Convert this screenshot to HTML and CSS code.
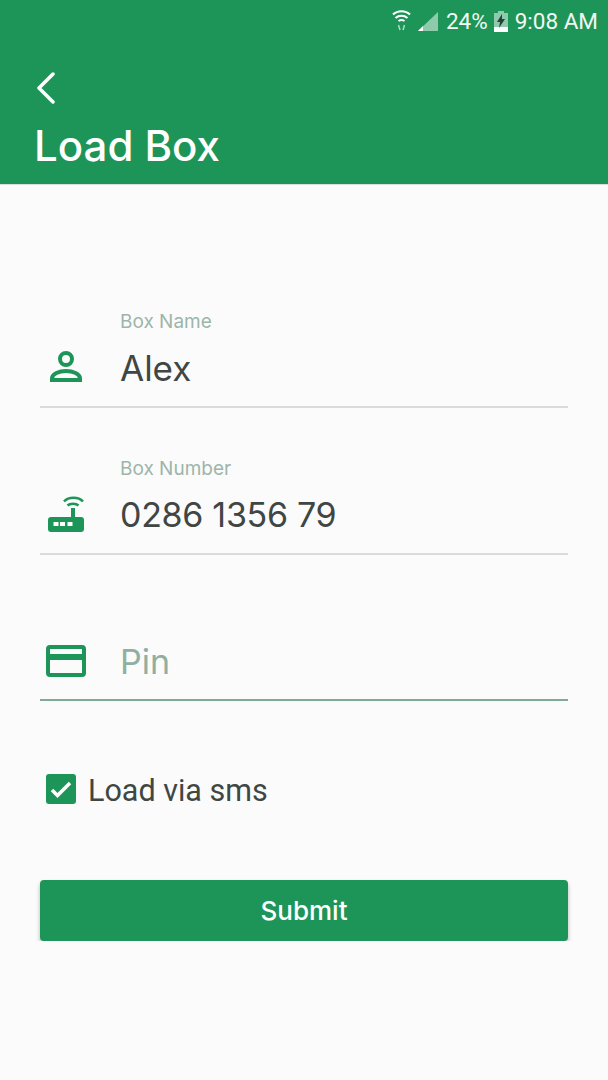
FILE: index.html
```html
<!DOCTYPE html>
<html lang="en">
<head>
    <meta charset="UTF-8">
    <meta name="viewport" content="width=device-width, initial-scale=1.0">
    <title>Load Box</title>
    <link rel="stylesheet" href="styles.css">
</head>
<body>
    <header class="app_bar">
        <div class="status_bar">
            <svg class="st_wifi" width="19" height="22" viewBox="0 0 19 22" fill="none" stroke="#fff" stroke-width="2">
                <path d="M1 4.500C5.500 0 13.500 0 18 4.500"/>
                <path d="M3.500 8C7 5 12 5 15.500 8"/>
                <path d="M6.500 11C8.200 9.800 10.800 9.800 12.500 11"/>
                <path d="M6.500 15l1.500 5M12.500 15l-1.500 5" stroke-width="1.500" stroke-opacity=".65"/>
            </svg>
            <svg class="st_signal" width="20" height="19" viewBox="0 0 20 19">
                <path d="M0 19L20 0v19z" fill="#fff" fill-opacity=".5"/>
                <path d="M0 19l5-5v5z" fill="#fff"/>
            </svg>
            <span class="st_txt">24%</span>
            <svg class="st_batt" width="14" height="21" viewBox="0 0 14 21">
                <path d="M4 0h6v2h4v19H0V2h4z" fill="#fff" fill-opacity=".5"/>
                <path d="M0 16h14v5H0z" fill="#fff"/>
                <path d="M8 3L3 11h3l-1 6 6-9H8z" fill="#24423a"/>
            </svg>
            <span class="st_txt">9:08 AM</span>
        </div>
        <svg class="back" width="20" height="32" viewBox="0 0 20 32" fill="none" stroke="#fff" stroke-width="3.500" stroke-linecap="round" stroke-linejoin="round">
            <path d="M17 2L3 16l14 14"/>
        </svg>
        <h1>Load Box</h1>
    </header>

    <form class="container">
        <div class="field">
            <div class="icon_col icon_person">
                <svg width="32" height="32" viewBox="0 0 32 32" fill="none" stroke="#1e9558" stroke-width="4">
                    <circle cx="16" cy="8" r="6"/>
                    <path d="M2 29v-1.500C2 23 9 20 16 20s14 3 14 7.500V29z"/>
                </svg>
            </div>
            <div class="input_col">
                <label class="float_label">Box Name</label>
                <div class="value value_name">Alex</div>
            </div>
        </div>

        <div class="field field_two">
            <div class="icon_col icon_router">
                <svg width="40" height="38" viewBox="0 0 40 38" fill="none">
                    <path d="M18 6.500C22.500 1.500 32.500 1.500 37 6.500M21.500 10.500C24 8 30 8 32.500 10.500" stroke="#1e9558" stroke-width="2.500"/>
                    <path d="M25 13h4v9h6a3 3 0 0 1 3 3v9a3 3 0 0 1-3 3H5a3 3 0 0 1-3-3v-9a3 3 0 0 1 3-3h20z" fill="#1e9558"/>
                    <path d="M7.500 27h5v4h-5zM14 27h5v4h-5zM21.500 27h5v4h-5z" fill="#fff"/>
                </svg>
            </div>
            <div class="input_col">
                <label class="float_label">Box Number</label>
                <div class="value value_num">0286 1356 79</div>
            </div>
        </div>

        <div class="field field_pin">
            <div class="icon_col">
                <svg width="40" height="32" viewBox="0 0 40 32">
                    <path d="M4 0h32a4 4 0 0 1 4 4v24a4 4 0 0 1-4 4H4a4 4 0 0 1-4-4V4a4 4 0 0 1 4-4zM4 4v5h32V4zM4 15v13h32V15z" fill="#1e9558" fill-rule="evenodd"/>
                </svg>
            </div>
            <div class="input_col">
                <div class="value placeholder">Pin</div>
            </div>
        </div>

        <div class="check_row">
            <svg class="check_box" width="30" height="30" viewBox="0 0 30 30">
                <rect width="30" height="30" rx="3" fill="#1e9558"/>
                <path d="M6 16l5.500 5.500L24 9" fill="none" stroke="#fff" stroke-width="3.500"/>
            </svg>
            <span class="check_txt">Load via sms</span>
        </div>

        <button type="button" class="btn_submit">Submit</button>
    </form>
</body>
</html>
```

FILE: styles.css
```css
*{
    margin:0;
    padding:0;
    box-sizing: border-box;
}
body{
    background-color: #fbfbfb;
    font-family: "Roboto", "Liberation Sans", sans-serif;
    color: #3f4644;
}
.app_bar{
    height: 185px;
    background-color: #1e9558;
    border-bottom: 1px solid #dcdcdc;
    color: white;
    padding-left: 35px;
}
.status_bar{
    display: flex;
    justify-content: flex-end;
    align-items: center;
    height: 42px;
    padding-right: 10px;
}
.st_txt{
    font-size: 22.500px;
    color: #f2f8f4;
}
.st_wifi{
    margin-right: 7px;
}
.st_signal{
    margin-right: 8px;
}
.st_batt{
    margin: 0 7px 0 6px;
}
.back{
    display: block;
    margin-top: 30px;
    margin-left: 1px;
}
h1{
    font-family: "Inter", "Liberation Sans", sans-serif;
    font-size: 42px;
    font-weight: 500;
    line-height: 50px;
    margin-top: 17px;
    margin-left: -1px;
}
.container{
    padding: 0 40px;
}
.field{
    display: flex;
    height: 97px;
    margin-top: 126px;
    border-bottom: 2px solid #dadada;
}
.field_two{
    height: 96px;
    margin-top: 51px;
}
.field_pin{
    height: 96px;
    margin-top: 50px;
    border-bottom-color: #7faa95;
}
.icon_col{
    width: 80px;
    padding-left: 6px;
    display: flex;
    align-items: flex-end;
    padding-bottom: 22px;
}
.icon_person{
    padding-left: 10px;
    padding-bottom: 23px;
}
.icon_router{
    padding-bottom: 20px;
}
.input_col{
    flex: 1;
    display: flex;
    flex-direction: column;
    justify-content: flex-end;
}
.float_label{
    font-family: "Inter", "Liberation Sans", sans-serif;
    font-size: 19px;
    line-height: 22px;
    color: #9db5aa;
}
.value{
    font-family: "Inter", "Liberation Sans", sans-serif;
    font-size: 34px;
    line-height: 40px;
    margin-top: 15px;
    margin-bottom: 17px;
}
.value_name{
    font-size: 35px;
    margin-bottom: 18px;
}
.value_num{
    letter-spacing: -0.300px;
    margin-bottom: 18px;
}
.placeholder{
    color: #8fb0a1;
}
.check_row{
    display: flex;
    align-items: center;
    margin-top: 72px;
    padding-left: 6px;
}
.check_box{
    margin-bottom: 4px;
}
.check_txt{
    font-size: 30.500px;
    margin-left: 12px;
}
.btn_submit{
    display: block;
    width: 100%;
    height: 61px;
    margin-top: 72px;
    background-color: #1e9558;
    color: white;
    border: none;
    border-radius: 4px;
    box-shadow: 0 3px 4px #b5b5b5;
    font-family: "Inter", "Liberation Sans", sans-serif;
    font-size: 26px;
    font-weight: 500;
}
```
